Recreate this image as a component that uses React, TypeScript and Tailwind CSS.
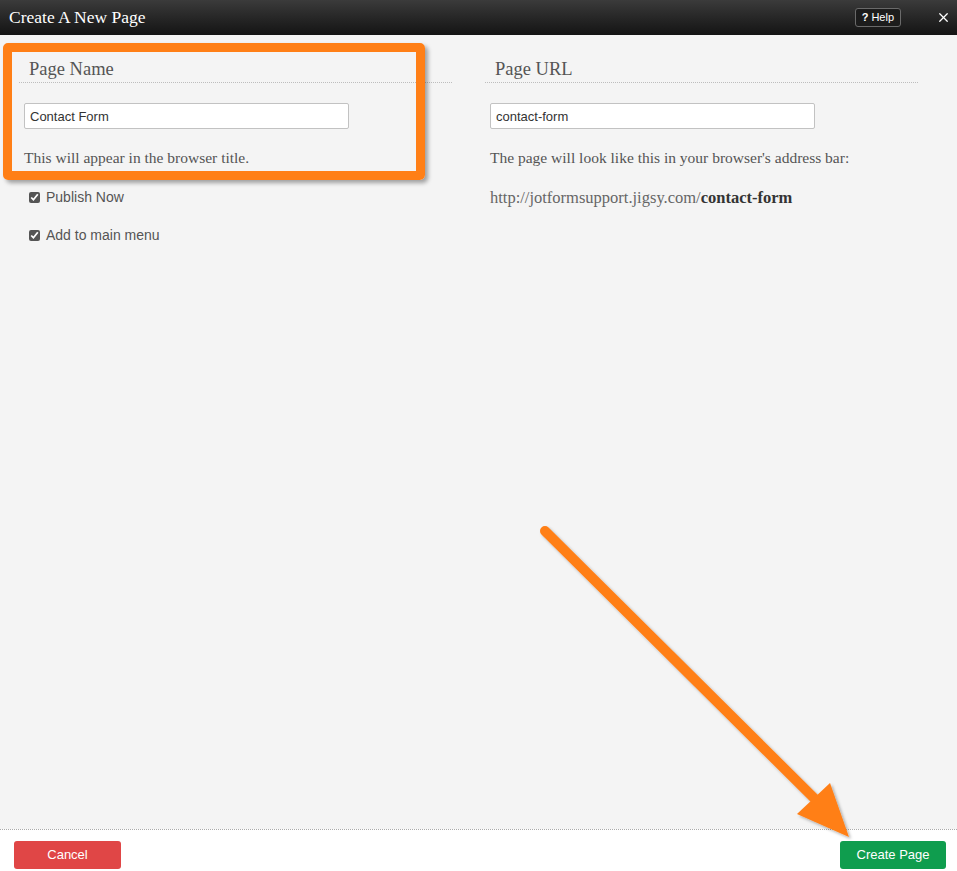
import { X } from "lucide-react";

const serif = "font-['Georgia','Liberation_Serif',serif]";
const sans = "font-['Liberation_Sans',Arial,sans-serif]";

export default function App() {
  return (
    <div className={`relative flex h-screen w-full flex-col overflow-hidden bg-[#f4f4f4] ${sans}`}>
      {/* Header */}
      <div className="flex h-[35px] shrink-0 items-center justify-between bg-gradient-to-b from-[#3b3b3b] to-[#141414] pl-[9px] pr-[6px]">
        <h1 className={`${serif} text-[17.5px] text-white`}>Create A New Page</h1>
        <div className="flex items-center gap-[35px]">
          <button className="flex h-[19px] items-center gap-[3px] rounded-[3px] border border-[#6a6a6a] bg-[#1c1c1c] px-[6px] text-[11px] font-bold text-white">
            <span>?</span>
            <span className="font-normal">Help</span>
          </button>
          <X className="h-[15px] w-[15px] text-white" strokeWidth={2} />
        </div>
      </div>

      {/* Body */}
      <div className="flex flex-1 gap-[33px] pl-[19px] pt-[20px]">
        {/* Left column */}
        <div className="w-[433px]">
          <h2 className={`${serif} h-[28px] border-b border-dotted border-[#bdbdbd] pl-[10px] text-[18.5px] leading-[28px] text-[#555]`}>
            Page Name
          </h2>
          <div className="pl-[5px] pt-[20px]">
            <input
              readOnly
              value="Contact Form"
              className="h-[26px] w-[325px] rounded-[2px] border border-[#c2c2c2] bg-white px-[5px] text-[13px] text-[#333] outline-none"
            />
            <p className={`${serif} mt-[19px] text-[15.5px] leading-[20px] text-[#555]`}>This will appear in the browser title.</p>
          </div>
          <div className="mt-[19px] flex flex-col gap-[18px] pl-[10px]">
            <label className="flex h-[20px] items-center gap-[6px] text-[14px] text-[#555]">
              <input type="checkbox" defaultChecked className="h-[11px] w-[11px] accent-[#555]" />
              Publish Now
            </label>
            <label className="flex h-[20px] items-center gap-[6px] text-[14px] text-[#555]">
              <input type="checkbox" defaultChecked className="h-[11px] w-[11px] accent-[#555]" />
              Add to main menu
            </label>
          </div>
        </div>

        {/* Right column */}
        <div className="w-[433px]">
          <h2 className={`${serif} h-[28px] border-b border-dotted border-[#bdbdbd] pl-[10px] text-[18.5px] leading-[28px] text-[#555]`}>
            Page URL
          </h2>
          <div className="pl-[5px] pt-[20px]">
            <input
              readOnly
              value="contact-form"
              className="h-[26px] w-[325px] rounded-[2px] border border-[#c2c2c2] bg-white px-[5px] text-[13px] text-[#333] outline-none"
            />
            <p className={`${serif} mt-[19px] text-[15.5px] leading-[20px] text-[#555]`}>
              The page will look like this in your browser's address bar:
            </p>
            <p className={`${serif} mt-[20px] text-[16.5px] leading-[20px] text-[#666]`}>
              http://jotformsupport.jigsy.com/<span className="font-bold text-[#333]">contact-form</span>
            </p>
          </div>
        </div>
      </div>

      {/* Footer */}
      <div className="flex h-[42px] shrink-0 items-start justify-between border-t border-dotted border-[#aaa] bg-white pl-[14px] pr-[11px] pt-[11px]">
        <button className="h-[28px] w-[107px] rounded-[3px] bg-[#e04646] text-[13px] text-white">Cancel</button>
        <button className="h-[28px] w-[106px] rounded-[3px] bg-[#0f9d4e] text-[13px] text-white">Create Page</button>
      </div>

      {/* Highlight box overlay */}
      <div className="pointer-events-none absolute left-[3px] top-[43px] h-[137px] w-[422px] rounded-[5px] border-[9px] border-[#ff7f16] shadow-[3px_3px_4px_rgba(0,0,0,0.35)]" />

      {/* Arrow overlay */}
      <svg className="pointer-events-none absolute left-0 top-0" width="957" height="871" viewBox="0 0 957 871">
        <defs>
          <filter id="sh" x="-10%" y="-10%" width="130%" height="130%">
            <feDropShadow dx="2" dy="2" stdDeviation="1.5" floodColor="#000" floodOpacity="0.3" />
          </filter>
        </defs>
        <g filter="url(#sh)">
          <line x1="545" y1="531" x2="818" y2="802" stroke="#ff7f16" strokeWidth="10" strokeLinecap="round" />
          <polygon points="849,837 797,814 830,783" fill="#ff7f16" />
        </g>
      </svg>
    </div>
  );
}
